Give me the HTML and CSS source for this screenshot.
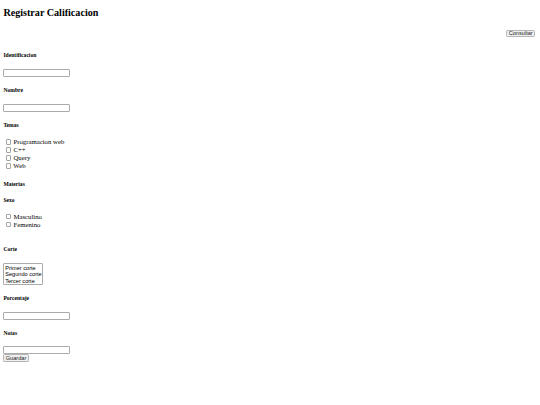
FILE: index.html
```html
<!DOCTYPE html>
<html lang="es">
<head>
<meta charset="utf-8">
<title>Registrar Calificacion</title>
<link rel="stylesheet" href="styles.css">
</head>
<body>
<h2 class="title">Registrar Calificacion</h2>
<div class="top-actions"><button type="button" class="btn">Consultar</button></div>
<form class="form">
  <h5 class="label first">Identificacion</h5>
  <input type="text" class="field">
  <h5 class="label">Nombre</h5>
  <input type="text" class="field">
  <h5 class="label">Temas</h5>
  <div class="checks temas">
    <label class="check"><input type="checkbox" class="box"> Programacion web</label>
    <label class="check"><input type="checkbox" class="box"> C++</label>
    <label class="check"><input type="checkbox" class="box"> Query</label>
    <label class="check"><input type="checkbox" class="box"> Web</label>
  </div>
  <h5 class="label">Materias</h5>
  <h5 class="label">Sexo</h5>
  <div class="checks sexo">
    <label class="check"><input type="checkbox" class="box"> Masculino</label>
    <label class="check"><input type="checkbox" class="box"> Femenino</label>
  </div>
  <h5 class="label">Corte</h5>
  <select class="list" multiple size="3">
    <option>Primer corte</option>
    <option>Segundo corte</option>
    <option>Tercer corte</option>
  </select>
  <h5 class="label">Porcentaje</h5>
  <input type="text" class="field">
  <h5 class="label">Notas</h5>
  <input type="text" class="field last">
  <button type="button" class="btn save">Guardar</button>
</form>
</body>
</html>
```

FILE: styles.css
```css
body {
  margin: 0;
  padding: 0 3.4px 3.4px;
  font-family: "Liberation Serif", "Times New Roman", serif;
  font-size: 6.75px;
  color: #000;
  background: #fff;
}
.title {
  font-size: 10.125px;
  line-height: 11.64px;
  font-weight: bold;
  margin: 7.06px 0 0;
}
.top-actions {
  display: flex;
  justify-content: flex-end;
  margin-top: 11px;
  padding-right: 1.6px;
}
.btn {
  display: block;
  box-sizing: border-box;
  height: 7.4px;
  padding: 0 1.3px;
  font-family: "Liberation Sans", Arial, sans-serif;
  font-size: 5.625px;
  line-height: 5.4px;
  color: #222;
  background: #efefef;
  border: 1px solid #b4b4b4;
  border-radius: 1.3px;
}
.form {
  margin: 0;
}
.label {
  font-size: 5.6px;
  line-height: 6.44px;
  font-weight: bold;
  margin: 9.36px 0;
}
.label.first {
  margin-top: 15.2px;
}
.field {
  display: block;
  box-sizing: border-box;
  width: 66.5px;
  height: 8.44px;
  margin: 10px 0;
  padding: 0 1px;
  font-family: "Liberation Sans", Arial, sans-serif;
  font-size: 5.625px;
  border: 1px solid #ababab;
  border-radius: 1px;
  background: #fff;
}
.field.last {
  margin: 9.4px 0 0;
}
.checks.temas {
  margin: 9.87px 0 11.2px;
}
.checks.sexo {
  margin: 9.5px 0 17.5px;
}
.check {
  display: block;
  height: 7.89px;
  line-height: 7.89px;
  white-space: nowrap;
}
.box {
  appearance: none;
  -webkit-appearance: none;
  display: inline-block;
  box-sizing: border-box;
  width: 5.5px;
  height: 5.5px;
  margin: 0 0.6px 0 2.3px;
  vertical-align: -0.6px;
  border: 1px solid #a3a3a3;
  border-radius: 1px;
  background: #fff;
}
.list {
  display: block;
  box-sizing: border-box;
  width: 40px;
  height: 21.7px;
  margin: 10.8px 0 10.3px;
  padding: 0.4px 0;
  font-family: "Liberation Sans", Arial, sans-serif;
  font-size: 5.625px;
  color: #000;
  border: 1px solid #ababab;
  border-radius: 1px;
  overflow: hidden;
  background: #fff;
}
.list option {
  padding: 0 0.8px;
  line-height: 6.7px;
  min-height: 6.7px;
}
.save {
  margin-top: 0;
  height: 8px;
  line-height: 6px;
}
```
